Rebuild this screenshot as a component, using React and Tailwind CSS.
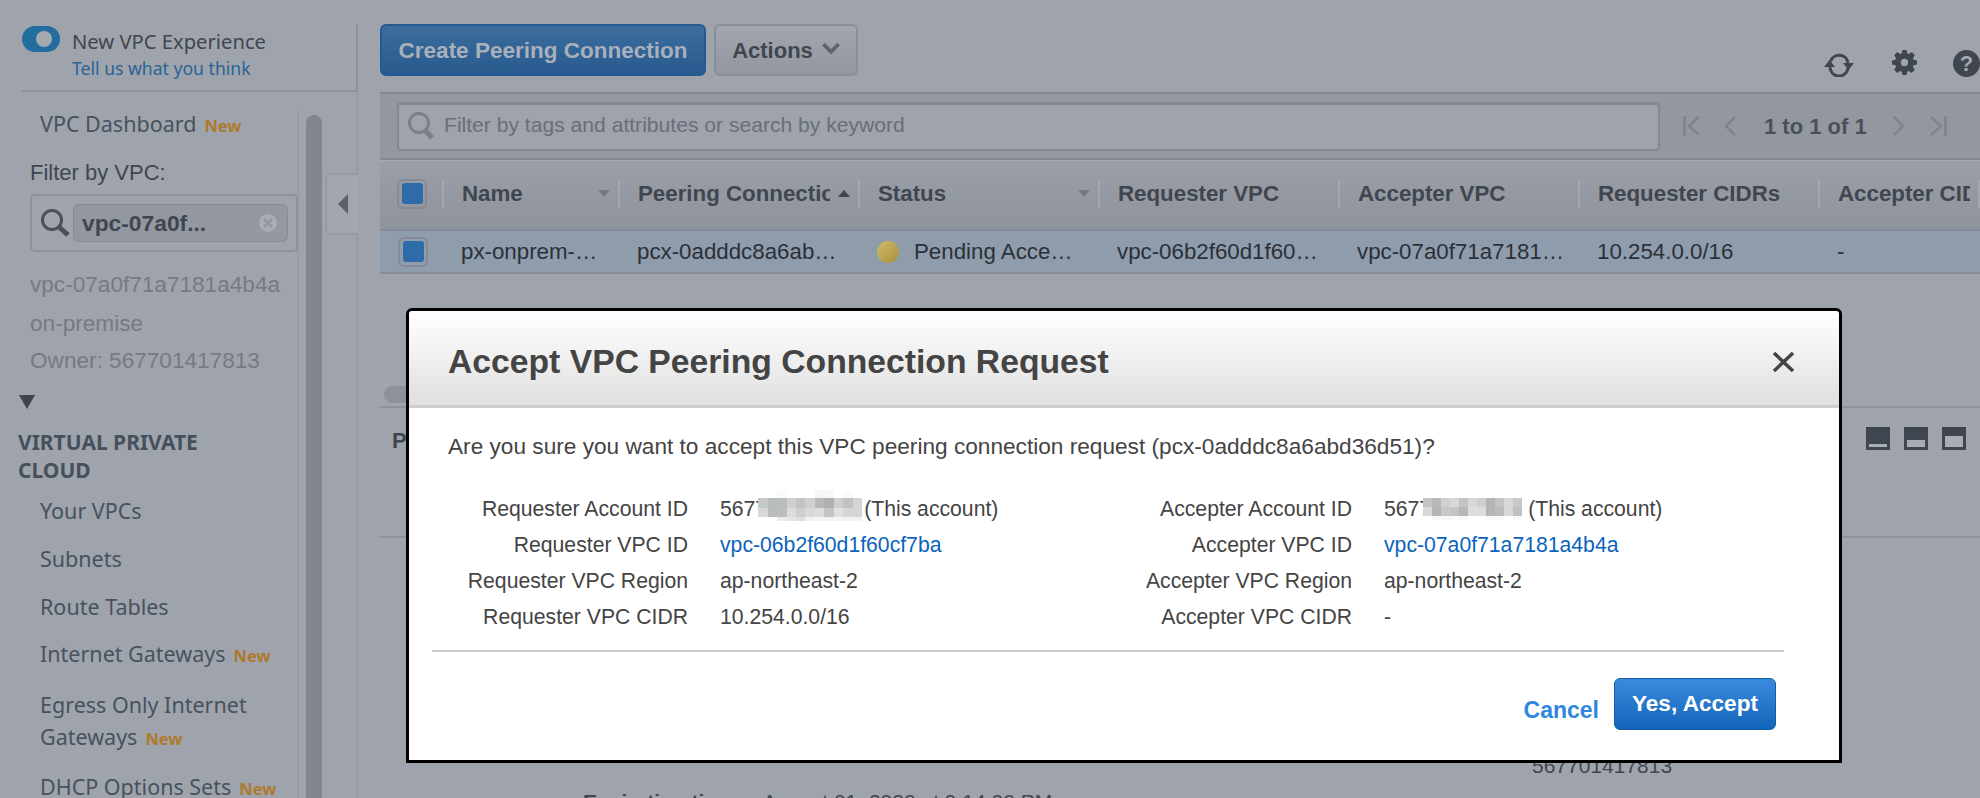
const sans = "font-['Liberation_Sans',Arial,sans-serif]"
const ember = "font-['Noto_Sans',sans-serif]"

function New() {
  return <span className="ml-2 text-[16.5px] font-bold text-[#ae7a2c]">New</span>
}

function NavItem({ children, isNew, className = '' }) {
  return (
    <div className={`pl-10 text-[21.5px] leading-[32px] text-[#47525f] ${className}`}>
      {children}
      {isNew && <New />}
    </div>
  )
}

function RefreshIcon({ className }) {
  return (
    <svg viewBox="0 0 32 24" className={className} fill="none" stroke="#3f4650" strokeWidth="3">
      <path d="M7.500 8.500A9 9 0 0 1 25 10" />
      <path d="M25 15A9 9 0 0 1 7 13" />
      <path d="M20 10h11l-5.500 7z" fill="#3f4650" stroke="none" />
      <path d="M1 14h11L6.500 7z" fill="#3f4650" stroke="none" />
    </svg>
  )
}

function GearIcon({ className }) {
  return (
    <svg viewBox="0 0 24 24" className={className} fill="#3f4650">
      <path
        fillRule="evenodd"
        d="M10 0h4l.6 3.200 1.700.7L19 2l3 3-1.900 2.700.7 1.700L24 10v4l-3.200.6-.7 1.700L22 19l-3 3-2.700-1.900-1.700.7L14 24h-4l-.6-3.200-1.700-.7L5 22l-3-3 1.900-2.700-.7-1.700L0 14v-4l3.200-.6.7-1.700L2 5l3-3 2.700 1.900 1.700-.7zM12 8.500a3.500 3.500 0 1 0 0 7 3.500 3.500 0 0 0 0-7z"
      />
    </svg>
  )
}

function PageIcon({ flip, bar }) {
  return (
    <svg viewBox={bar ? '0 0 18 20' : '0 0 13 20'} className={`h-[20px] ${bar ? 'w-[18px]' : 'w-[13px]'} ${flip ? 'rotate-180' : ''}`} fill="none" stroke="#7f838d" strokeWidth="2.500">
      {bar ? (
        <>
          <path d="M1.500 0v20" />
          <path d="M16 1L6 10l10 9" />
        </>
      ) : (
        <path d="M11 1L2 10l9 9" />
      )}
    </svg>
  )
}

function PaneIcon({ fill }) {
  return (
    <span className="flex h-[23px] w-[24px] items-end bg-[#3f4650] p-[3px]">
      <span className={`w-full bg-[#a9adb4] ${fill}`} />
    </span>
  )
}

function Checkbox({ className = '' }) {
  return (
    <span className={`flex h-[30px] w-[30px] items-center justify-center rounded-[6px] border-2 border-[#868a93] ${className}`}>
      <span className="h-[21px] w-[21px] rounded-[3px] bg-[#2d6ca8]" />
    </span>
  )
}

const columns = [
  { title: 'Name', width: 'w-[176px]', sort: 'down' },
  { title: 'Peering Connection', width: 'w-[240px]', sort: 'up' },
  { title: 'Status', width: 'w-[240px]', sort: 'down' },
  { title: 'Requester VPC', width: 'w-[240px]' },
  { title: 'Accepter VPC', width: 'w-[240px]' },
  { title: 'Requester CIDRs', width: 'w-[240px]' },
  { title: 'Accepter CIDRs', width: 'w-[160px]' },
]

const cells = [
  { text: 'px-onprem-…', width: 'w-[176px]' },
  { text: 'pcx-0adddc8a6ab…', width: 'w-[240px]' },
  { text: 'Pending Acce…', width: 'w-[240px]', dot: true },
  { text: 'vpc-06b2f60d1f60…', width: 'w-[240px]' },
  { text: 'vpc-07a0f71a7181…', width: 'w-[240px]' },
  { text: '10.254.0.0/16', width: 'w-[240px]' },
  { text: '-', width: 'w-[160px]' },
]

const mosaicA = [
  'bg-white', 'bg-white', 'bg-[#fbfbfb]', 'bg-white', 'bg-white', 'bg-white', 'bg-[#f6f6f6]', 'bg-[#f8f8f8]', 'bg-white', 'bg-[#fafafa]', 'bg-white',
  'bg-[#c4c8c8]', 'bg-[#b8bcbc]', 'bg-[#bcbebe]', 'bg-[#cfcfcf]', 'bg-[#c4c4c4]', 'bg-[#d0d0d0]', 'bg-[#b8b8b8]', 'bg-[#afafaf]', 'bg-[#cfcfcf]', 'bg-[#c2c2c2]', 'bg-[#d4d4d4]',
  'bg-[#d8d8d8]', 'bg-[#b8bcbc]', 'bg-[#bcbebe]', 'bg-[#dcdcdc]', 'bg-[#cfcfcf]', 'bg-[#d8d8d8]', 'bg-[#dddddd]', 'bg-[#c4c4c4]', 'bg-[#e0e0e0]', 'bg-[#d6d6d6]', 'bg-[#d6d6d6]',
  'bg-white', 'bg-white', 'bg-[#ebebeb]', 'bg-[#e4e4e4]', 'bg-[#dedede]', 'bg-[#f1f1f1]', 'bg-[#f4f4f4]', 'bg-[#f0f0f0]', 'bg-[#f6f6f6]', 'bg-[#f2f2f2]', 'bg-[#f2f2f2]',
]

const mosaicB = [
  'bg-[#c4c4c4]', 'bg-[#b8b8b8]', 'bg-[#cfcfcf]', 'bg-[#d8d8d8]', 'bg-[#c4c4c4]', 'bg-[#d8d8d8]', 'bg-[#cfcfcf]', 'bg-[#b4b4b4]', 'bg-[#c4c4c4]', 'bg-[#d8d8d8]', 'bg-[#c8c8c8]',
  'bg-[#d8d8d8]', 'bg-[#b4b4b4]', 'bg-[#c8c8c8]', 'bg-[#c4c4c4]', 'bg-[#b8b8b8]', 'bg-[#dedede]', 'bg-[#dcdcdc]', 'bg-[#b4b4b4]', 'bg-[#bcbcbc]', 'bg-[#d8d8d8]', 'bg-[#c0c0c0]',
  'bg-white', 'bg-[#f6f6f6]', 'bg-[#f6f6f6]', 'bg-[#fafafa]', 'bg-[#f8f8f8]', 'bg-white', 'bg-white', 'bg-[#f8f8f8]', 'bg-[#f8f8f8]', 'bg-white', 'bg-[#fafafa]',
]

function Mosaic({ cells, className }) {
  return (
    <span className={`inline-grid grid-cols-11 ${className}`}>
      {cells.map((c, i) => (
        <span key={i} className={c} />
      ))}
    </span>
  )
}

function DetailRow({ label, children, labelWidth }) {
  return (
    <div className="flex h-[36px] items-center">
      <span className={`${labelWidth} text-right text-[#444444]`}>{label}</span>
      <span className="ml-[32px] flex items-center whitespace-nowrap text-[#444444]">{children}</span>
    </div>
  )
}

function Modal() {
  return (
    <div className={`absolute left-[406px] top-[308px] flex h-[455px] w-[1436px] flex-col rounded-t-[6px] border-[3px] border-black bg-white ${sans}`}>
      <div className="flex h-[97px] shrink-0 items-center justify-between rounded-t-[4px] border-b-[3px] border-[#cccccc] bg-gradient-to-b from-white to-[#e0e0e0] pl-[39px] pr-[44px] pt-[7px]">
        <h1 className="text-[33.700px] font-bold text-[#444444]">Accept VPC Peering Connection Request</h1>
        <svg viewBox="0 0 23 20" className="h-[20px] w-[23px]" fill="none" stroke="#444444" strokeWidth="3.500">
          <path d="M2 1l19 18M21 1L2 19" />
        </svg>
      </div>
      <div className="flex flex-1 flex-col text-[21.200px]">
        <p className="ml-[39px] mt-[22px] h-[46px] whitespace-nowrap text-[22.650px] text-[#444444]">
          Are you sure you want to accept this VPC peering connection request (pcx-0adddc8a6abd36d51)?
        </p>
        <div className="mt-[15px] flex">
          <div className="w-[665px]">
            <DetailRow label="Requester Account ID" labelWidth="w-[279px]">
              5677
              <Mosaic cells={mosaicA} className="-ml-[9px] -mt-[7px] mr-[2px] h-[31px] w-[104px] grid-rows-[8px_10px_9px_4px]" />
              (This account)
            </DetailRow>
            <DetailRow label="Requester VPC ID" labelWidth="w-[279px]">
              <a className="text-[#0b63bb]">vpc-06b2f60d1f60cf7ba</a>
            </DetailRow>
            <DetailRow label="Requester VPC Region" labelWidth="w-[279px]">ap-northeast-2</DetailRow>
            <DetailRow label="Requester VPC CIDR" labelWidth="w-[279px]">10.254.0.0/16</DetailRow>
          </div>
          <div>
            <DetailRow label="Accepter Account ID" labelWidth="w-[278px]">
              5677
              <Mosaic cells={mosaicB} className="-ml-[8px] mr-[6px] h-[22px] w-[99px] grid-rows-[9px_9px_4px]" />
              (This account)
            </DetailRow>
            <DetailRow label="Accepter VPC ID" labelWidth="w-[278px]">
              <a className="text-[#0b63bb]">vpc-07a0f71a7181a4b4a</a>
            </DetailRow>
            <DetailRow label="Accepter VPC Region" labelWidth="w-[278px]">ap-northeast-2</DetailRow>
            <DetailRow label="Accepter VPC CIDR" labelWidth="w-[278px]">-</DetailRow>
          </div>
        </div>
        <div className="ml-[23px] mr-[55px] mt-[15px] h-[2px] bg-[#cccccc]" />
        <div className="mr-[63px] mt-[26px] flex items-start justify-end">
          <a className="mr-[15px] mt-[12px] text-[23px] font-bold leading-[40px] text-[#2e86de]">Cancel</a>
          <button className="h-[52px] w-[162px] rounded-[6px] border border-[#125ca8] bg-gradient-to-b from-[#3a8ade] to-[#1165ba] text-[22.600px] font-bold text-white">
            Yes, Accept
          </button>
        </div>
      </div>
    </div>
  )
}

function Sidebar() {
  return (
    <aside className={`flex h-full w-[380px] shrink-0 flex-col ${ember}`}>
      <div className="ml-[22px] mt-[24px] flex h-[68px] w-[336px] shrink-0 items-start gap-[12px] border-b-2 border-r-2 border-[#8d9199]">
        <span className="mt-[2px] flex h-[26px] w-[38px] items-center justify-end rounded-full bg-[#246d9f] pr-[8px]">
          <span className="h-[16px] w-[16px] rounded-full bg-[#a4a8b0]" />
        </span>
        <div>
          <div className="mt-[2px] text-[20.200px] leading-[30px] text-[#3f4650]">New VPC Experience</div>
          <div className="text-[17.600px] leading-[24px] text-[#2a6496]">Tell us what you think</div>
        </div>
      </div>
      <div className="flex flex-1 overflow-hidden">
        <div className="mt-[17px] w-[299px] shrink-0 border-r-2 border-[#979ba3]">
          <NavItem className="-mt-[1px]">
            VPC Dashboard
            <New />
          </NavItem>
          <div className={`ml-[30px] mt-[15px] text-[22px] leading-[32px] text-[#3f4650] ${sans}`}>Filter by VPC:</div>
          <div className="ml-[30px] mt-[5px] flex h-[58px] w-[268px] items-center gap-[3px] rounded-[5px] border-2 border-[#8d9199] pl-[8px]">
            <svg viewBox="0 0 30 30" className="h-[30px] w-[30px] shrink-0" fill="none" stroke="#4a5059">
              <circle cx="12" cy="12" r="9.500" strokeWidth="3" />
              <path d="M19 19l9 8" strokeWidth="5" />
            </svg>
            <div className={`flex h-[38px] w-[215px] items-center justify-between rounded-[6px] border border-[#868a93] bg-[#93979f] pl-[8px] pr-[10px] text-[22.800px] font-bold text-[#3f4650] ${sans}`}>
              vpc-07a0f...
              <span className="flex h-[18px] w-[18px] items-center justify-center rounded-full bg-[#a9adb4]">
                <svg viewBox="0 0 10 10" className="h-[10px] w-[10px]" fill="none" stroke="#93979f" strokeWidth="2.500">
                  <path d="M1 1l8 8M9 1l-8 8" />
                </svg>
              </span>
            </div>
          </div>
          <div className={`ml-[30px] mt-[13px] text-[22.600px] text-[#757a84] ${sans}`}>
            <div className="leading-[39px]">vpc-07a0f71a7181a4b4a</div>
            <div className="leading-[39px]">on-premise</div>
            <div className="leading-[36px]">Owner: 567701417813</div>
          </div>
          <div className="ml-[19px] mt-[16px] h-0 w-0 border-x-[8px] border-t-[14px] border-x-transparent border-t-[#3f4650]" />
          <div className="ml-[18px] mt-[19px] text-[21px] font-bold leading-[28px] text-[#46505c]">
            VIRTUAL PRIVATE
            <br />
            CLOUD
          </div>
          <NavItem className="mt-[11px]">Your VPCs</NavItem>
          <NavItem className="mt-[16px]">Subnets</NavItem>
          <NavItem className="mt-[16px]">Route Tables</NavItem>
          <NavItem className="mt-[15px]" isNew>Internet Gateways</NavItem>
          <NavItem className="mt-[17px]" isNew>Egress Only Internet<br />Gateways</NavItem>
          <NavItem className="mt-[16px]" isNew>DHCP Options Sets</NavItem>
        </div>
        <div className="ml-[7px] mt-[23px] h-full w-[16px] shrink-0 rounded-t-full bg-[#81858e]" />
        <div className="relative ml-[2px] h-full w-[34px] shrink-0 border-r-2 border-[#979ba3]">
          <div className="absolute right-[-2px] top-[81px] flex h-[62px] w-[33px] items-center justify-center rounded-l-[6px] border-2 border-r-0 border-[#979ba3] bg-[#a2a6ae]">
            <span className="h-0 w-0 border-y-[10px] border-r-[10px] border-y-transparent border-r-[#5a6069]" />
          </div>
        </div>
      </div>
    </aside>
  )
}

function Main() {
  return (
    <main className={`flex h-full min-w-0 flex-1 flex-col ${sans}`}>
      <div className="flex h-[92px] shrink-0 items-start">
        <button className="mt-[24px] h-[52px] w-[326px] rounded-[6px] border-2 border-[#245a92] bg-gradient-to-b from-[#3d6d9e] to-[#275a8e] pt-[2px] text-[22.500px] font-bold text-[#a8b0bb]">
          Create Peering Connection
        </button>
        <button className="ml-[8px] mt-[24px] flex h-[52px] w-[144px] items-center justify-center gap-[9px] rounded-[6px] border-2 border-[#8a8e97] bg-gradient-to-b from-[#a2a6ae] to-[#92969f] text-[22px] font-bold text-[#3f4650]">
          Actions
          <svg viewBox="0 0 16 12" className="mb-[4px] h-[13px] w-[18px]" fill="none" stroke="#5f646e" strokeWidth="3.500">
            <path d="M1 2l7 7 7-7" />
          </svg>
        </button>
        <div className="ml-auto mt-[50px] flex items-start">
          <RefreshIcon className="mt-[3px] h-[24px] w-[32px]" />
          <GearIcon className="ml-[37px] h-[25px] w-[25px]" />
          <span className="ml-[36px] flex h-[27px] w-[27px] items-center justify-center rounded-full bg-[#3f4650] text-[22px] font-bold text-[#a4a8b0]">?</span>
        </div>
      </div>
      <div className="flex h-[68px] shrink-0 items-center border-y-2 border-[#858992] bg-[#93979f] pl-[17px]">
        <div className="flex h-[49px] w-[1263px] items-center rounded-[4px] border-2 border-[#858992] bg-[#9fa3ab] pl-[8px] shadow-[inset_0_1px_1px_#858992]">
          <svg viewBox="0 0 28 30" className="h-[30px] w-[28px] shrink-0" fill="none" stroke="#7a7f88">
            <circle cx="12" cy="12" r="9.500" strokeWidth="3" />
            <path d="M18 19l7 8" strokeWidth="5" />
          </svg>
          <span className="ml-[9px] pb-[2px] text-[21.100px] text-[#696e78]">Filter by tags and attributes or search by keyword</span>
        </div>
        <div className="ml-[23px] flex items-center">
          <PageIcon bar />
          <span className="ml-[23px]"><PageIcon /></span>
          <span className="ml-[27px] text-[22px] font-bold text-[#4a5059]">1 to 1 of 1</span>
          <span className="ml-[25px]"><PageIcon flip /></span>
          <span className="ml-[24px]"><PageIcon flip bar /></span>
        </div>
      </div>
      <div className="h-[1px] shrink-0 bg-[#a6aab1]" />
      <div className="flex h-[68px] shrink-0 items-center bg-gradient-to-b from-[#9a9ea6] to-[#8f939c] pb-[3px]">
        <div className="flex w-[64px] shrink-0 items-center justify-between pl-[17px]">
          <Checkbox />
          <span className="h-[28px] w-[2px] bg-[#a2a6ae]" />
        </div>
        {columns.map((col) => (
          <div key={col.title} className={`relative flex h-[28px] shrink-0 items-center pl-[18px] pr-[10px] text-[22.300px] font-bold text-[#3f4650] ${col.width}`}>
            <span className="min-w-0 flex-1 overflow-hidden whitespace-nowrap">{col.title}</span>
            {col.sort === 'down' && <span className="ml-[8px] h-0 w-0 border-x-[6px] border-t-[7px] border-x-transparent border-t-[#757a84]" />}
            {col.sort === 'up' && <span className="ml-[8px] h-0 w-0 border-x-[6px] border-b-[7px] border-x-transparent border-b-[#3f4650]" />}
            <span className="absolute right-0 top-0 h-[28px] w-[2px] bg-[#a2a6ae]" />
          </div>
        ))}
      </div>
      <div className="flex h-[45px] shrink-0 items-center border-y-2 border-[#858c97] bg-[#8f9cac] text-[22.300px] text-[#2b3038]">
        <div className="w-[64px] shrink-0 pl-[18px]">
          <Checkbox />
        </div>
        {cells.map((cell) => (
          <div key={cell.text} className={`flex shrink-0 items-center whitespace-nowrap pl-[17px] ${cell.width}`}>
            {cell.dot && <span className="mr-[15px] h-[22px] w-[22px] rounded-full bg-gradient-to-br from-[#d0bc6c] to-[#a98f3c]" />}
            {cell.text}
          </div>
        ))}
      </div>
      <div className="h-[134px] shrink-0 border-b-2 border-[#8d9199]">
        <div className="ml-[4px] mt-[112px] h-[17px] w-[36px] rounded-full bg-[#8d9199]" />
      </div>
      <div className="flex h-[130px] shrink-0 border-b-2 border-[#8d9199]">
        <span className="ml-[12px] mt-[16px] text-[22px] font-bold text-[#3f4650]">P</span>
        <div className="ml-auto mr-[14px] mt-[19px] flex gap-[14px]">
          <PaneIcon fill="h-[3px]" />
          <PaneIcon fill="h-[7px]" />
          <PaneIcon fill="h-[11px]" />
        </div>
      </div>
      <div className="relative flex-1 text-[21px] text-[#3f4650]">
        <span className="absolute left-[1152px] top-[212px]">567701417813</span>
        <div className="ml-[203px] mt-[248px] flex gap-[28px] whitespace-nowrap">
          <span className="font-bold">Expiration time</span>
          <span>August 01, 2020 at 9:14:00 PM</span>
        </div>
      </div>
    </main>
  )
}

export default function App() {
  return (
    <div className="relative flex h-[798px] w-full overflow-hidden bg-[#9fa3ab]">
      <Sidebar />
      <Main />
      <Modal />
    </div>
  )
}
